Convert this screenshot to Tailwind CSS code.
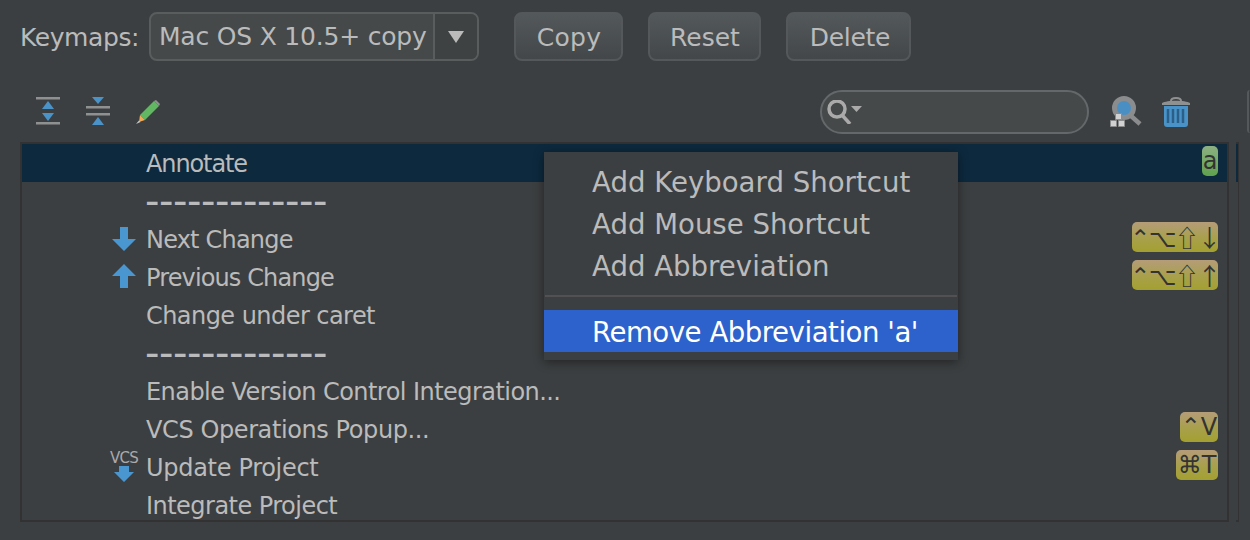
<!DOCTYPE html>
<html lang="en">
<head>
    <meta charset="UTF-8">
    <title>Keymap</title>
    <script src="https://cdn.jsdelivr.net/npm/@tailwindcss/browser@4"></script>
</head>
<body class="w-[1250px] h-[540px] overflow-hidden bg-[#3c3f41] text-[#bbbbbb] font-['DejaVu_Sans',sans-serif] text-[24px] relative">

    <!-- top row -->
    <div class="flex items-center h-[49px] mt-[12px] pl-[20px] text-[25px]">
        <span class="w-[129px] tracking-[-0.4px] pt-[2px]">Keymaps:</span>
        <div class="flex w-[330px] h-[49px] border-2 border-[#5a5d5e] rounded-[8px] bg-[#45494a]">
            <span class="flex-1 pl-[8px] leading-[45px] tracking-[-0.2px] whitespace-nowrap">Mac OS X 10.5+ copy</span>
            <span class="w-[44px] flex items-center justify-center border-l-2 border-[#5a5d5e] bg-[#3f4243] rounded-r-[6px]">
                <svg width="16" height="12" viewBox="0 0 16 12"><path d="M0 0H16L8 12Z" fill="#bbbbbb"/></svg>
            </span>
        </div>
        <button class="ml-[35px] w-[109px] h-[49px] pt-[2px] pl-[1px] border-2 border-[#54585a] rounded-[8px] bg-gradient-to-b from-[#53585a] to-[#43474a] tracking-[0.3px]">Copy</button>
        <button class="ml-[25px] w-[113px] h-[49px] pt-[2px] pl-[1px] border-2 border-[#54585a] rounded-[8px] bg-gradient-to-b from-[#53585a] to-[#43474a]">Reset</button>
        <button class="ml-[25px] w-[125px] h-[49px] pt-[2px] pl-[3px] border-2 border-[#54585a] rounded-[8px] bg-gradient-to-b from-[#53585a] to-[#43474a] tracking-[-0.3px]">Delete</button>
    </div>

    <!-- toolbar -->
    <div class="flex items-center h-[44px] mt-[29px] pl-[36px]">
        <svg width="24" height="28" viewBox="0 0 24 28" class="mt-[-2px]">
            <path d="M0 0H24V2.5H0ZM0 25H24V27.5H0Z" fill="#8f9191"/>
            <path d="M12 4L18 12H6Z" fill="#4a93c9"/>
            <path d="M6 16H18L12 24Z" fill="#4a93c9"/>
        </svg>
        <svg width="24" height="28" viewBox="0 0 24 28" class="ml-[26px] mt-[-2px]">
            <path d="M0 9H24V11.5H0ZM0 16H24V18.5H0Z" fill="#8f9191"/>
            <path d="M6 0H18L12 7Z" fill="#4a93c9"/>
            <path d="M12 20L18 28H6Z" fill="#4a93c9"/>
        </svg>
        <svg width="24" height="24" viewBox="0 0 24 24" class="ml-[26px]">
            <path d="M4 15L18 1L23 6L9 20Z" fill="#62b762"/>
            <path d="M18 1L20 0L24 4L23 6Z" fill="#8f9191"/>
            <path d="M4 15L9 20L3 22Z" fill="#eea95a"/>
            <path d="M3 20.5L4.5 22L0 24Z" fill="#c9c9c9"/>
        </svg>
        <div class="ml-[660px] w-[269px] h-[44px] border-2 border-[#65686a] rounded-full bg-[#45494a] flex items-center pl-[5px]">
            <svg width="36" height="24" viewBox="0 0 36 24">
                <circle cx="10" cy="9" r="8" fill="none" stroke="#aaaaaa" stroke-width="3.5"/>
                <path d="M15 15L23 24" stroke="#aaaaaa" stroke-width="3.5"/>
                <path d="M24 6H35L29.5 12Z" fill="#aaaaaa"/>
            </svg>
        </div>
        <svg width="32" height="32" viewBox="0 0 32 32" class="ml-[21px]">
            <circle cx="14" cy="12" r="9.5" fill="#4a8fc4" stroke="#8a8c8d" stroke-width="5"/>
            <path d="M20 19L30 28" stroke="#8a8c8d" stroke-width="4.5"/>
            <path d="M5.5 17.5h6v6h-6ZM.5 24.5h6v6h-6ZM8.5 24.5h6v6h-6Z" fill="#d2d2d2" stroke="#8a8c8d" stroke-width="1"/>
        </svg>
        <svg width="28" height="30" viewBox="0 0 28 30" class="ml-[20px]">
            <path d="M9 4C9 0 19 0 19 4" fill="none" stroke="#8f9191" stroke-width="2"/>
            <path d="M0 6C5 3 23 3 28 6V8H0Z" fill="#8f9191"/>
            <path d="M2 9H26V27Q26 30 23 30H5Q2 30 2 27Z" fill="#4a93c9"/>
            <path d="M6 12V26M11 12V26M16 12V26M21 12V26" stroke="#2c5f87" stroke-width="2.5"/>
        </svg>
    </div>
    <div class="absolute left-[1247px] top-[90px] w-[3px] h-[43px] border-l-2 border-[#55585a] rounded-l-[4px]"></div>

    <!-- keymap tree -->
    <div class="flex mt-[8px] pl-[20px]">
        <div class="w-[1209px] h-[380px] border-2 border-[#323232] overflow-hidden">
            <div class="h-[38px] pt-[2px] bg-[#0d293e] flex items-center pl-[124px] relative">
                <span class="tracking-[-1.1px]">Annotate</span>
                <span class="absolute right-[9px] top-[2px] h-[30px] w-[16px] rounded-[5px] bg-gradient-to-b from-[#8cb083] to-[#5ea24c] text-[#333333] flex items-center justify-center">a</span>
            </div>
            <div class="h-[38px] flex items-center pl-[123px] text-[40px] leading-[33px] tracking-[-0.44px]">-------------</div>
            <div class="h-[38px] pt-[2px] flex items-center pl-[90px] relative">
                <svg width="24" height="24" viewBox="0 0 24 24" class="mr-[10px] mt-[-2px]"><path d="M8 0H16V12H24L12 24L0 12H8Z" fill="#4a96d0"/></svg>
                <span class="tracking-[-0.8px]">Next Change</span>
                <span class="absolute right-[9px] top-[2px] h-[30px] w-[86px] rounded-[5px] bg-gradient-to-b from-[#b59c78] via-[#a9a04e] to-[#a4a02e] text-[#333333] font-['Noto_Sans_CJK_JP','DejaVu_Sans',sans-serif] flex items-center justify-center whitespace-nowrap tracking-[-1.5px]">⌃⌥⇧↓</span>
            </div>
            <div class="h-[38px] pt-[2px] flex items-center pl-[90px] relative">
                <svg width="24" height="24" viewBox="0 0 24 24" class="mr-[10px] mt-[-4px]"><path d="M8 24H16V12H24L12 0L0 12H8Z" fill="#4a96d0"/></svg>
                <span class="tracking-[-0.87px]">Previous Change</span>
                <span class="absolute right-[9px] top-[2px] h-[30px] w-[86px] rounded-[5px] bg-gradient-to-b from-[#b59c78] via-[#a9a04e] to-[#a4a02e] text-[#333333] font-['Noto_Sans_CJK_JP','DejaVu_Sans',sans-serif] flex items-center justify-center whitespace-nowrap tracking-[-1.5px]">⌃⌥⇧↑</span>
            </div>
            <div class="h-[38px] pt-[2px] flex items-center pl-[124px] tracking-[-0.55px]">Change under caret</div>
            <div class="h-[38px] flex items-center pl-[123px] text-[40px] leading-[33px] tracking-[-0.44px]">-------------</div>
            <div class="h-[38px] pt-[2px] flex items-center pl-[124px] tracking-[-0.55px]">Enable Version Control Integration...</div>
            <div class="h-[38px] pt-[2px] flex items-center pl-[124px] relative">
                <span class="tracking-[-0.4px]">VCS Operations Popup...</span>
                <span class="absolute right-[9px] top-[2px] h-[30px] w-[38px] rounded-[5px] bg-gradient-to-b from-[#b59c78] via-[#a9a04e] to-[#a4a02e] text-[#333333] flex items-center justify-center whitespace-nowrap">⌃V</span>
            </div>
            <div class="h-[38px] pt-[2px] flex items-center pl-[124px] relative">
                <span class="tracking-[-0.3px]">Update Project</span>
                <span class="absolute left-[88px] top-[2px] text-[15px] leading-[16px] tracking-[-0.7px] text-[#aaaaaa]">VCS</span>
                <svg width="20" height="16" viewBox="0 0 20 16" class="absolute left-[92px] top-[18px]"><path d="M5 0H15V6H20L10 16L0 6H5Z" fill="#4a96d0"/></svg>
                <span class="absolute right-[9px] top-[2px] h-[30px] w-[42px] rounded-[5px] bg-gradient-to-b from-[#b59c78] via-[#a9a04e] to-[#a4a02e] text-[#333333] flex items-center justify-center whitespace-nowrap">⌘T</span>
            </div>
            <div class="h-[38px] pt-[2px] flex items-center pl-[124px] tracking-[-0.53px]">Integrate Project</div>
        </div>
        <div class="ml-[7px] w-[3px] h-[380px] border-t-2 border-b-2 border-r border-[#323232]">
            <div class="h-[38px] bg-[#0d293e]"></div>
        </div>
    </div>

    <!-- context menu -->
    <div class="absolute left-[544px] top-[152px] w-[414px] h-[208px] bg-[#3c3f41] shadow-[0_2px_10px_rgba(0,0,0,0.45)] pt-[9px] text-[27.6px]">
        <div class="h-[42px] pt-[2px] flex items-center pl-[48px]">Add Keyboard Shortcut</div>
        <div class="h-[42px] pt-[2px] flex items-center pl-[48px]">Add Mouse Shortcut</div>
        <div class="h-[42px] pt-[2px] flex items-center pl-[48px]">Add Abbreviation</div>
        <div class="h-[23px] pt-[8px] px-[1px]"><div class="h-[2px] bg-[#515151]"></div></div>
        <div class="h-[42px] pt-[4px] flex items-center pl-[48px] bg-[#2d62cd] text-white tracking-[-0.48px]">Remove Abbreviation 'a'</div>
    </div>

</body>
</html>
